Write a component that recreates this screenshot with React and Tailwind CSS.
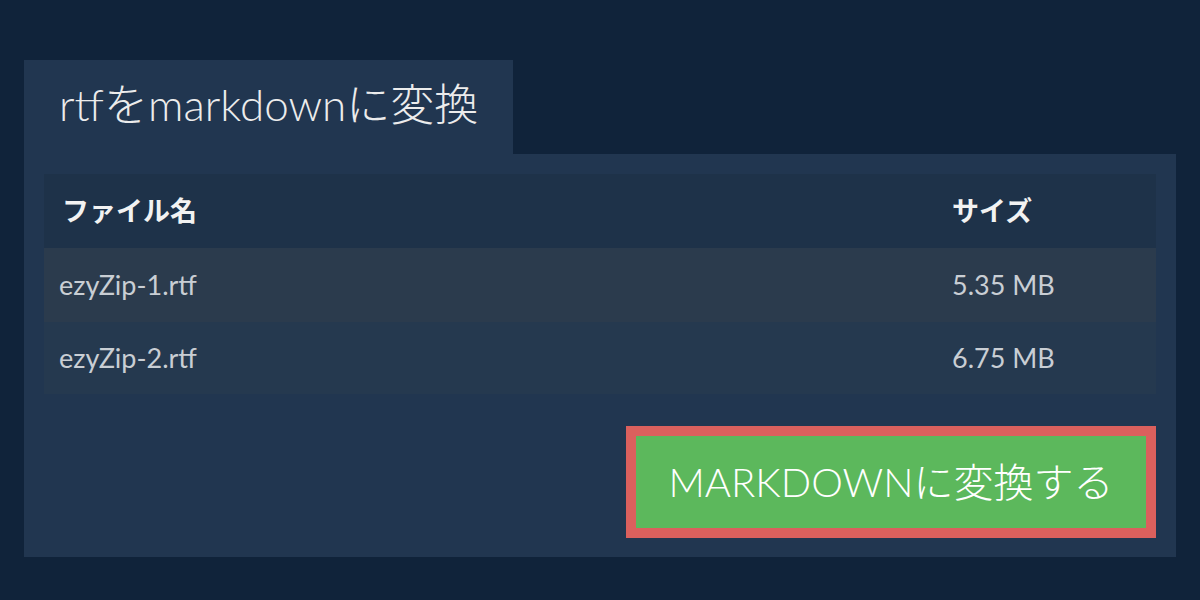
const files = [
  { name: 'ezyZip-1.rtf', size: '5.35 MB' },
  { name: 'ezyZip-2.rtf', size: '6.75 MB' },
]

const font = { fontFamily: 'Lato, "Noto Sans CJK JP", sans-serif' }

export default function App() {
  return (
    <div className="w-full h-[600px] bg-[#10233a] pt-[60px] px-6" style={font}>
      <div className="w-[1152px]">
        {/* タイトルタブ */}
        <div className="w-[489px] h-[94px] bg-[#213650] pl-[35px] pt-[18px]">
          <h1 className="text-[44px] leading-[52px] font-light text-[#ececec]">rtfをmarkdownに変換</h1>
        </div>

        <div className="bg-[#213650] px-5 pt-5 pb-[19px]">
          <div className="w-[1112px]">
            <div className="grid grid-cols-[908px_1fr] h-[74px] items-center bg-[#1e3249] text-[27px] font-bold text-[#f2f2f2]">
              <div className="pl-[18px]">ファイル名</div>
              <div>サイズ</div>
            </div>
            {files.map((f, i) => (
              <div
                key={f.name}
                className={
                  'grid grid-cols-[908px_1fr] items-center text-[27px] text-[#c9ced4] ' +
                  (i === 0 ? 'h-[74px] bg-[#2b3b4d]' : 'h-[72px] bg-[#25394f]')
                }
              >
                <div className="pl-[15px]">{f.name}</div>
                <div>{f.size}</div>
              </div>
            ))}
          </div>

          <div className="flex justify-end mt-8">
            <button className="w-[530px] h-[112px] border-[10px] border-[#db605d] bg-[#5cb85c] text-white text-[40px] font-light">
              MARKDOWNに変換する
            </button>
          </div>
        </div>
      </div>
    </div>
  )
}
